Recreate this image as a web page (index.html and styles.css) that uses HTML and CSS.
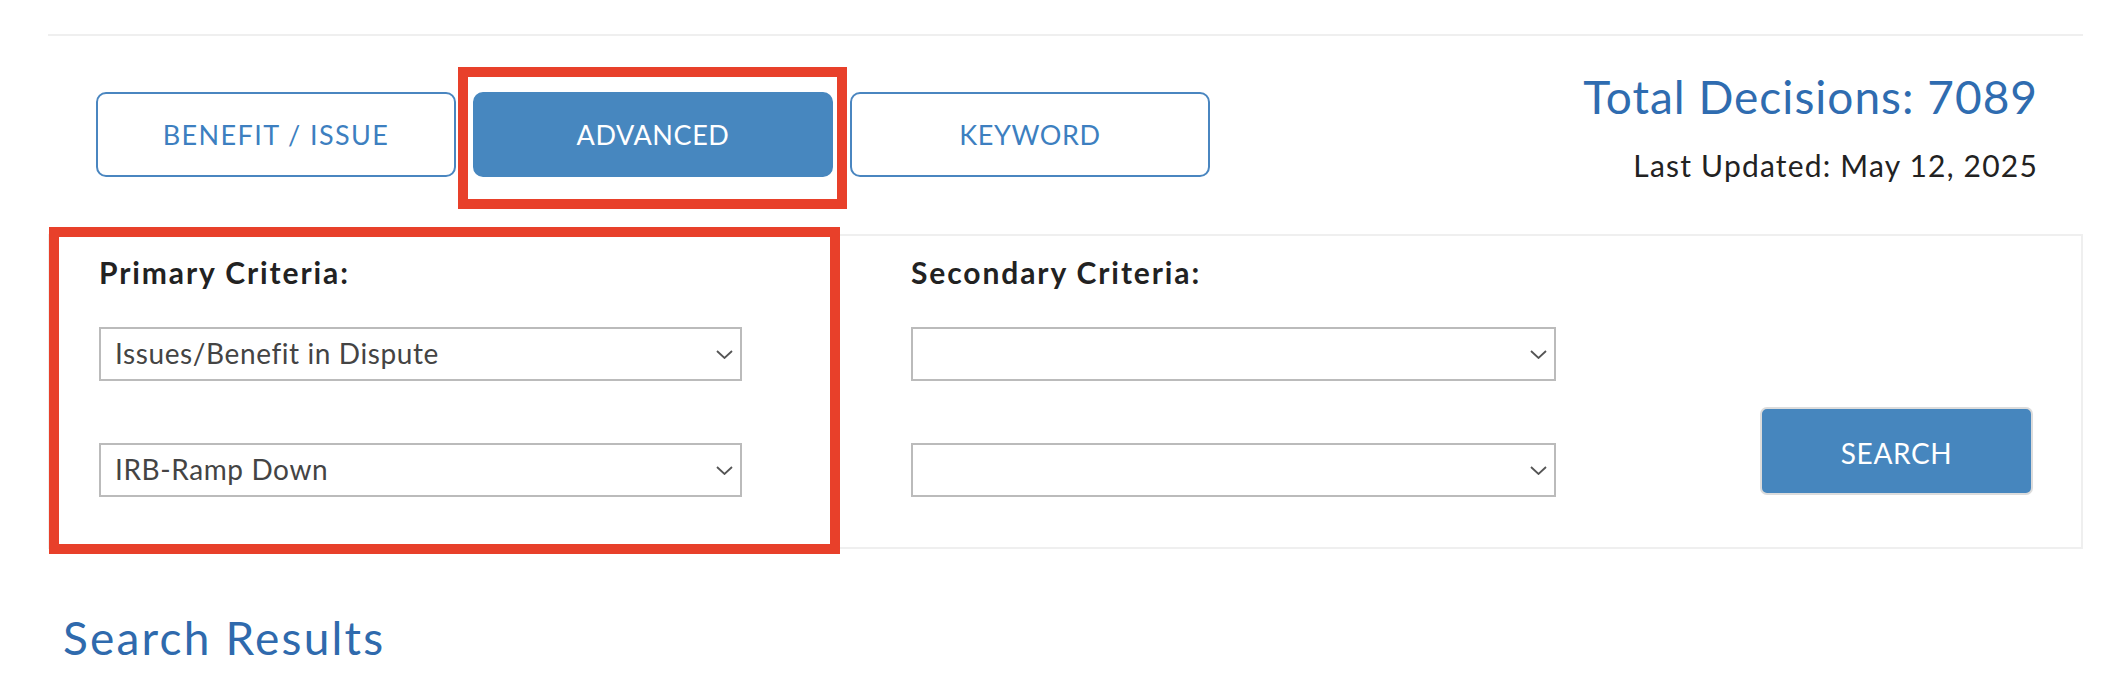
FILE: index.html
```html
<!DOCTYPE html>
<html lang="en">
<head>
<meta charset="utf-8">
<title>Decisions Search</title>
<link rel="stylesheet" href="styles.css">
</head>
<body>
<div class="page">
  <div class="header">
    <div class="tabs">
      <button class="tab tab-wide">BENEFIT / ISSUE</button>
      <button class="tab tab-active">ADVANCED<span class="mark mark-tab"></span></button>
      <button class="tab">KEYWORD</button>
    </div>
    <div class="stats">
      <div class="total">Total Decisions: 7089</div>
      <div class="updated">Last Updated: May 12, 2025</div>
    </div>
  </div>

  <div class="panel">
    <span class="mark mark-panel"></span>
    <div class="col col-primary">
      <div class="label">Primary Criteria:</div>
      <div class="select"><span class="select-text">Issues/Benefit in Dispute</span><svg class="chev" viewBox="0 0 17 9" width="17" height="9"><path d="M1 1 L8.5 8 L16 1" fill="none" stroke="#555" stroke-width="1.8"/></svg></div>
      <div class="select select-second"><span class="select-text">IRB-Ramp Down</span><svg class="chev" viewBox="0 0 17 9" width="17" height="9"><path d="M1 1 L8.5 8 L16 1" fill="none" stroke="#555" stroke-width="1.8"/></svg></div>
    </div>
    <div class="col col-secondary">
      <div class="label">Secondary Criteria:</div>
      <div class="select"><span class="select-text"></span><svg class="chev" viewBox="0 0 17 9" width="17" height="9"><path d="M1 1 L8.5 8 L16 1" fill="none" stroke="#555" stroke-width="1.8"/></svg></div>
      <div class="select select-second"><span class="select-text"></span><svg class="chev" viewBox="0 0 17 9" width="17" height="9"><path d="M1 1 L8.5 8 L16 1" fill="none" stroke="#555" stroke-width="1.8"/></svg></div>
    </div>
    <div class="spacer"></div>
    <button class="search">SEARCH</button>
  </div>

  <h2 class="results">Search Results</h2>
</div>
</body>
</html>
```

FILE: styles.css
```css
* { box-sizing: border-box; }
html, body { margin: 0; padding: 0; background: #fff; }
body { font-family: "Lato", "Open Sans", sans-serif; color: #222; }

.page {
  margin: 34px 39px 0 48px;
  border-top: 2px solid #efefef;
}

.header {
  display: flex;
  justify-content: space-between;
  align-items: flex-start;
}

.tabs {
  display: flex;
  gap: 17px;
  margin: 56px 0 57px 48px;
}

.tab {
  position: relative;
  width: 360px;
  height: 85px;
  border: 2px solid #4a86c0;
  border-radius: 10px;
  background: #fff;
  color: #3d7fc0;
  font-family: "Lato", "Open Sans", sans-serif;
  font-size: 27px;
  letter-spacing: 0.6px;
  padding: 0;
  cursor: pointer;
}

.tab-wide { letter-spacing: 1.4px; }

.tab-active {
  background: #4787bf;
  border-color: #4787bf;
  color: #fff;
}

.mark {
  position: absolute;
  border: 10px solid #e8402a;
  pointer-events: none;
}

.mark-tab {
  left: -17px;
  top: -27px;
  width: 389px;
  height: 142px;
}

.stats {
  margin: 38px 45px 0 0;
  text-align: right;
}

.total {
  font-size: 46px;
  line-height: 46px;
  letter-spacing: 1px;
  color: #2f6cb0;
}

.updated {
  margin-top: 30px;
  font-size: 30px;
  line-height: 30px;
  letter-spacing: 1.2px;
  color: #222;
}

.panel {
  position: relative;
  display: flex;
  align-items: flex-start;
  border: 2px solid #efefef;
  height: 315px;
  padding: 22px 48px 49px 49px;
}

.mark-panel {
  left: -1px;
  top: -9px;
  width: 791px;
  height: 327px;
}

.col { display: flex; flex-direction: column; }
.col-primary { width: 643px; margin-right: 169px; }
.col-secondary { width: 645px; }

.label {
  font-size: 30px;
  line-height: 29px;
  font-weight: 700;
  letter-spacing: 1.9px;
  color: #222;
  margin-bottom: 40px;
}

.select {
  display: flex;
  align-items: center;
  justify-content: space-between;
  height: 54px;
  border: 2px solid #bbb;
  padding: 0 7px 0 14px;
  background: #fff;
}

.select-second { margin-top: 62px; }

.select-text {
  font-size: 28px;
  line-height: 28px;
  letter-spacing: 0.6px;
  color: #444;
  margin-bottom: 3px;
}

.chev { display: block; flex: none; }

.spacer { flex: 1; }

.search {
  align-self: flex-end;
  margin-bottom: 3px;
  width: 273px;
  height: 88px;
  background: #4686be;
  border: 2px solid #dcdcdc;
  border-radius: 7px;
  color: #fff;
  font-family: "Lato", "Open Sans", sans-serif;
  font-size: 28px;
  letter-spacing: 0.6px;
  padding: 3px 0 0 0;
  cursor: pointer;
}

.results {
  margin: 66px 0 0 15px;
  font-size: 46px;
  line-height: 45px;
  font-weight: 400;
  letter-spacing: 2.2px;
  color: #2f6aad;
}
```
